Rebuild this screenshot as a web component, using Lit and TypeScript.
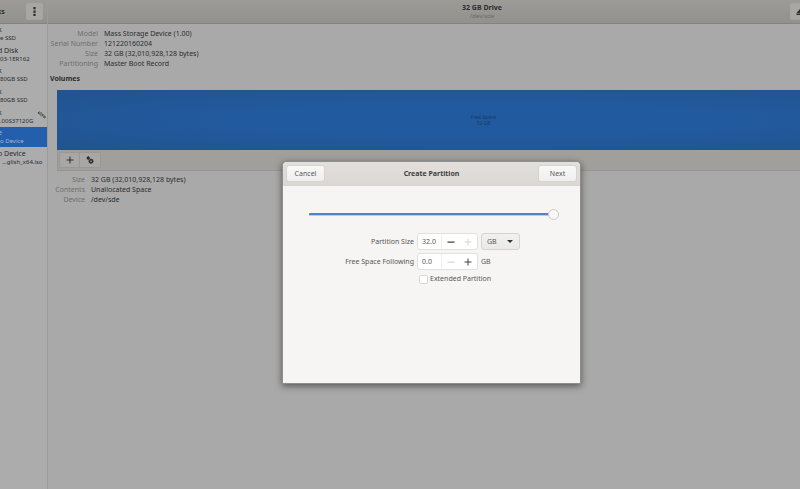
import { LitElement, html, css, svg } from "lit";
import { customElement, state } from "lit/decorators.js";
import { classMap } from "lit/directives/class-map.js";

interface Drive {
  name: string;
  model: string;
  busy?: boolean;
  indent?: boolean;
}

const DRIVES: Drive[] = [
  { name: "k", model: "e SSD" },
  { name: "d Disk", model: "03-1ER162" },
  { name: "k", model: "80GB SSD" },
  { name: "k", model: "80GB SSD" },
  { name: "k", model: ".00S37120G", busy: true },
  { name: "e", model: "o Device" },
  { name: "o Device", model: "…glish_x64.iso", indent: true },
];

const DRIVE_FACTS = [
  ["Model", "Mass Storage Device (1.00)"],
  ["Serial Number", "121220160204"],
  ["Size", "32 GB (32,010,928,128 bytes)"],
  ["Partitioning", "Master Boot Record"],
];

const VOLUME_FACTS = [
  ["Size", "32 GB (32,010,928,128 bytes)"],
  ["Contents", "Unallocated Space"],
  ["Device", "/dev/sde"],
];

const icon = (size: number, body: unknown) =>
  html`<svg width=${size} height=${size} viewBox="0 0 16 16" aria-hidden="true">${body}</svg>`;

const plus = svg`<path d="M7 1h2v6h6v2H9v6H7V9H1V7h6z" fill="currentColor"/>`;
const minus = svg`<path d="M1 7h14v2.4H1z" fill="currentColor"/>`;
const dots = svg`<path d="M6 0h4v4H6zM6 6h4v4H6zM6 12h4v4H6z" fill="currentColor"/>`;
const gears = svg`<circle cx="4.500" cy="4" r="1.800" fill="none" stroke="currentColor" stroke-width="2.400"/>
  <circle cx="10" cy="10.500" r="3.200" fill="none" stroke="currentColor" stroke-width="3"/>
  <path d="M10 5.200v2M10 13.800v2M4.700 10.500h2M13.300 10.500h2M6.300 14.200l1.400-1.400M12.300 8.200l1.400-1.400M4.500 0v8M1 4h7" stroke="currentColor" stroke-width="1.600"/>`;
const eject = svg`<path d="M8 2l7 8H1zM1 11h14v3H1z" fill="currentColor"/>`;
const busy = svg`<g fill="none" stroke="currentColor" stroke-width="1.500">
  <path d="M0 4h8M3 1L0 4l3 3M4 8h6M8 5l3 3-3 3"/>
  <circle cx="13" cy="12" r="1.800"/></g>`;

@customElement("app-root")
export class DisksWindow extends LitElement {
  @state() private selected = 5;

  static styles = css`
    :host {
      display: block;
      position: relative;
      height: 100vh;
      overflow: hidden;
      background: #a9a9a9;
      color: #2b2d2e;
      font-family: "Noto Sans", "Open Sans", sans-serif;
      font-size: 7px;
      line-height: 10px;
    }
    * {
      box-sizing: border-box;
    }
    button,
    input,
    select {
      font: inherit;
      color: inherit;
      margin: 0;
      padding: 0;
    }
    button {
      display: flex;
      align-items: center;
      justify-content: center;
    }
    svg {
      display: block;
      flex: none;
    }
    .window {
      display: flex;
      height: 100%;
    }
    .bar {
      height: 24px;
      background: linear-gradient(#9c9b97, #93918d);
      border-bottom: 1px solid #858380;
    }
    .side {
      flex: none;
      width: 48px;
      border-right: 1px solid #9b9b9a;
      background: #acacac;
    }
    .side .bar {
      display: flex;
      align-items: center;
      justify-content: space-between;
      padding-right: 4px;
      font-weight: 700;
      text-indent: -3px;
    }
    .tool {
      width: 17px;
      height: 17px;
      border: 1px solid #a6a5a2;
      border-radius: 2px;
      background: #a8a7a4;
    }
    .drives {
      display: grid;
      grid-auto-rows: 1fr;
      height: 144px;
      margin: 0;
      padding: 0;
      list-style: none;
    }
    .drive {
      position: relative;
      display: block;
      width: 100%;
      height: 100%;
      border: 0;
      background: none;
      text-align: left;
      white-space: nowrap;
      line-height: 9px;
    }
    .drive span {
      display: block;
    }
    .drive .name {
      text-indent: -2px;
    }
    .drive .model {
      font-size: 6px;
    }
    .indent .model {
      padding-left: 2px;
    }
    .drive.on {
      background: #235fac;
      color: #a9b8cb;
    }
    .drive svg {
      position: absolute;
      right: 1px;
      top: 5px;
    }
    .main {
      flex: none;
      width: calc(100% + 68px);
    }
    .main .bar {
      display: grid;
      grid-template-columns: 1fr auto 1fr;
      align-items: center;
    }
    .title {
      grid-column: 2;
      text-align: center;
      line-height: 9px;
    }
    .title h1,
    .volumes h2,
    .dialog h2 {
      margin: 0;
      font-size: 7px;
      font-weight: 700;
      line-height: inherit;
    }
    .title p {
      margin: 0;
      font-size: 6px;
      color: #6b6a68;
    }
    .eject {
      justify-self: end;
      width: 24px;
      margin-right: 102px;
      justify-content: flex-start;
      padding-left: 5px;
    }
    .facts {
      display: grid;
      grid-template-columns: 49px 1fr;
      column-gap: 6px;
      margin: 0;
      padding: 5px 0 0 1px;
    }
    .facts.volume {
      grid-template-columns: 36px 1fr;
      padding-top: 4px;
    }
    .facts dt {
      color: #6f6f6f;
      text-align: right;
      white-space: nowrap;
    }
    .facts dd {
      margin: 0;
    }
    .volumes h2 {
      padding: 5px 2px 6px;
    }
    .map {
      display: grid;
      place-content: center;
      height: 60px;
      margin: 0 6px 0 9px;
      background: radial-gradient(ellipse at center, #225a9f 40%, #21548f);
      border: 1px solid #245489;
      color: #183a66;
      font-size: 5px;
      line-height: 6px;
      text-align: center;
    }
    .actions {
      display: flex;
      height: 21px;
      margin: 0 6px 0 9px;
      padding: 2px 1px;
      background: #a09f9c;
      border: 1px solid #979693;
      border-top: 0;
    }
    .actions button {
      width: 21px;
      border: 1px solid #999895;
      background: #a8a7a5;
    }
    .actions button + button {
      border-left: 0;
    }
    .dialog {
      position: absolute;
      left: 283px;
      top: 162px;
      width: 297px;
      height: 221px;
      border-radius: 4px 4px 0 0;
      background: #f6f5f3;
      color: #55585a;
      box-shadow: 0 0 0 1px #8e8e8c, 0 2px 7px 1px rgba(0, 0, 0, 0.5);
    }
    .dialog header {
      display: flex;
      align-items: center;
      justify-content: space-between;
      height: 24px;
      padding: 0 3px;
      border-radius: 4px 4px 0 0;
      border-bottom: 1px solid #d8d5d2;
      background: linear-gradient(#e2dfdc, #dad7d4);
    }
    .dialog h2 {
      color: #3c3f40;
    }
    .push {
      width: 39px;
      height: 17px;
      border: 1px solid #d6d3d0;
      border-radius: 3px;
      background: linear-gradient(#f8f8f7, #f0efed);
    }
    .body {
      padding: 22px 21px 0 26px;
    }
    .range {
      display: block;
      appearance: none;
      width: 100%;
      height: 12px;
      background: none;
    }
    .range::-webkit-slider-runnable-track {
      height: 3px;
      border-radius: 1px;
      background: linear-gradient(#5482c6 60%, #a9cff6 68%);
    }
    .range::-webkit-slider-thumb {
      appearance: none;
      width: 11px;
      height: 11px;
      margin-top: -4px;
      border: 1px solid #cbc8c4;
      border-radius: 50%;
      background: #faf9f8;
    }
    .form {
      display: grid;
      grid-template-columns: 105px 61px auto;
      justify-content: start;
      align-items: center;
      gap: 3px;
      padding-top: 13px;
    }
    .form > label:not(.check) {
      text-align: right;
    }
    .spin {
      display: grid;
      grid-template-columns: 1fr 17px 18px;
      height: 17px;
      border: 1px solid #e2e0dd;
      border-radius: 3px;
      background: #fff;
      overflow: hidden;
    }
    .spin input {
      width: 100%;
      min-width: 0;
      padding-left: 4px;
      border: 0;
      border-right: 1px solid #f1f0ef;
      background: none;
    }
    .spin button {
      border: 0;
      background: none;
      color: #3f4344;
    }
    .spin button:disabled {
      color: #d6d6d5;
    }
    .unit {
      position: relative;
      width: 39px;
    }
    .unit select {
      display: block;
      appearance: none;
      width: 100%;
      height: 17px;
      padding-left: 5px;
      border: 1px solid #d6d3d0;
      border-radius: 3px;
      background: linear-gradient(#f2f1ef, #ebe9e7);
    }
    .unit svg {
      position: absolute;
      right: 7px;
      top: 6px;
      pointer-events: none;
      color: #2e3436;
    }
    .check {
      grid-column: 2 / 4;
      display: flex;
      align-items: center;
      gap: 2px;
      padding-left: 2px;
      line-height: 12px;
    }
    .check input {
      appearance: none;
      width: 9px;
      height: 9px;
      border: 1px solid #d9d6d3;
      border-radius: 2px;
      background: #fff;
    }
  `;

  private facts(rows: string[][], volume = false) {
    return html`<dl class=${classMap({ facts: true, volume })}>
      ${rows.map(([k, v]) => html`<dt>${k}</dt><dd>${v}</dd>`)}
    </dl>`;
  }

  render() {
    return html`
      <div class="window">
        <aside class="side">
          <div class="bar">
            <span>ks</span>
            <button class="tool" aria-label="Menu">${icon(9, dots)}</button>
          </div>
          <ul class="drives">
            ${DRIVES.map(
              (d, i) => html`<li>
                <button
                  class=${classMap({ drive: true, on: i === this.selected, indent: !!d.indent })}
                  @click=${() => (this.selected = i)}
                >
                  <span class="name">${d.name}</span><span class="model">${d.model}</span>
                  ${d.busy ? icon(8, busy) : null}
                </button>
              </li>`
            )}
          </ul>
        </aside>
        <main class="main">
          <div class="bar">
            <div class="title">
              <h1>32 GB Drive</h1>
              <p>/dev/sde</p>
            </div>
            <button class="tool eject" aria-label="Eject">${icon(8, eject)}</button>
          </div>
          ${this.facts(DRIVE_FACTS)}
          <section class="volumes">
            <h2>Volumes</h2>
            <div class="map"><span>Free Space</span><span>32 GB</span></div>
            <div class="actions">
              <button aria-label="Create partition">${icon(8, plus)}</button>
              <button aria-label="Partition options">${icon(8, gears)}</button>
            </div>
            ${this.facts(VOLUME_FACTS, true)}
          </section>
        </main>
      </div>
      <div class="dialog" role="dialog" aria-labelledby="heading">
        <header>
          <button class="push">Cancel</button>
          <h2 id="heading">Create Partition</h2>
          <button class="push">Next</button>
        </header>
        <div class="body">
          <input class="range" type="range" min="0" max="32" .value=${"32"} aria-label="Partition size" />
          <div class="form">
            <label for="size">Partition Size</label>
            <div class="spin">
              <input id="size" inputmode="decimal" value="32.0" />
              <button aria-label="Decrease size">${icon(8, minus)}</button>
              <button aria-label="Increase size" disabled>${icon(8, plus)}</button>
            </div>
            <div class="unit">
              <select aria-label="Unit">
                <option>GB</option>
                <option>MB</option>
              </select>
              <svg width="6" height="6" viewBox="0 0 6 6" aria-hidden="true">
                <path d="M0 1h6L3 4z" fill="currentColor" />
              </svg>
            </div>
            <label for="free">Free Space Following</label>
            <div class="spin">
              <input id="free" inputmode="decimal" value="0.0" />
              <button aria-label="Decrease free space" disabled>${icon(8, minus)}</button>
              <button aria-label="Increase free space">${icon(8, plus)}</button>
            </div>
            <span>GB</span>
            <label class="check"><input type="checkbox" />Extended Partition</label>
          </div>
        </div>
      </div>
    `;
  }
}
